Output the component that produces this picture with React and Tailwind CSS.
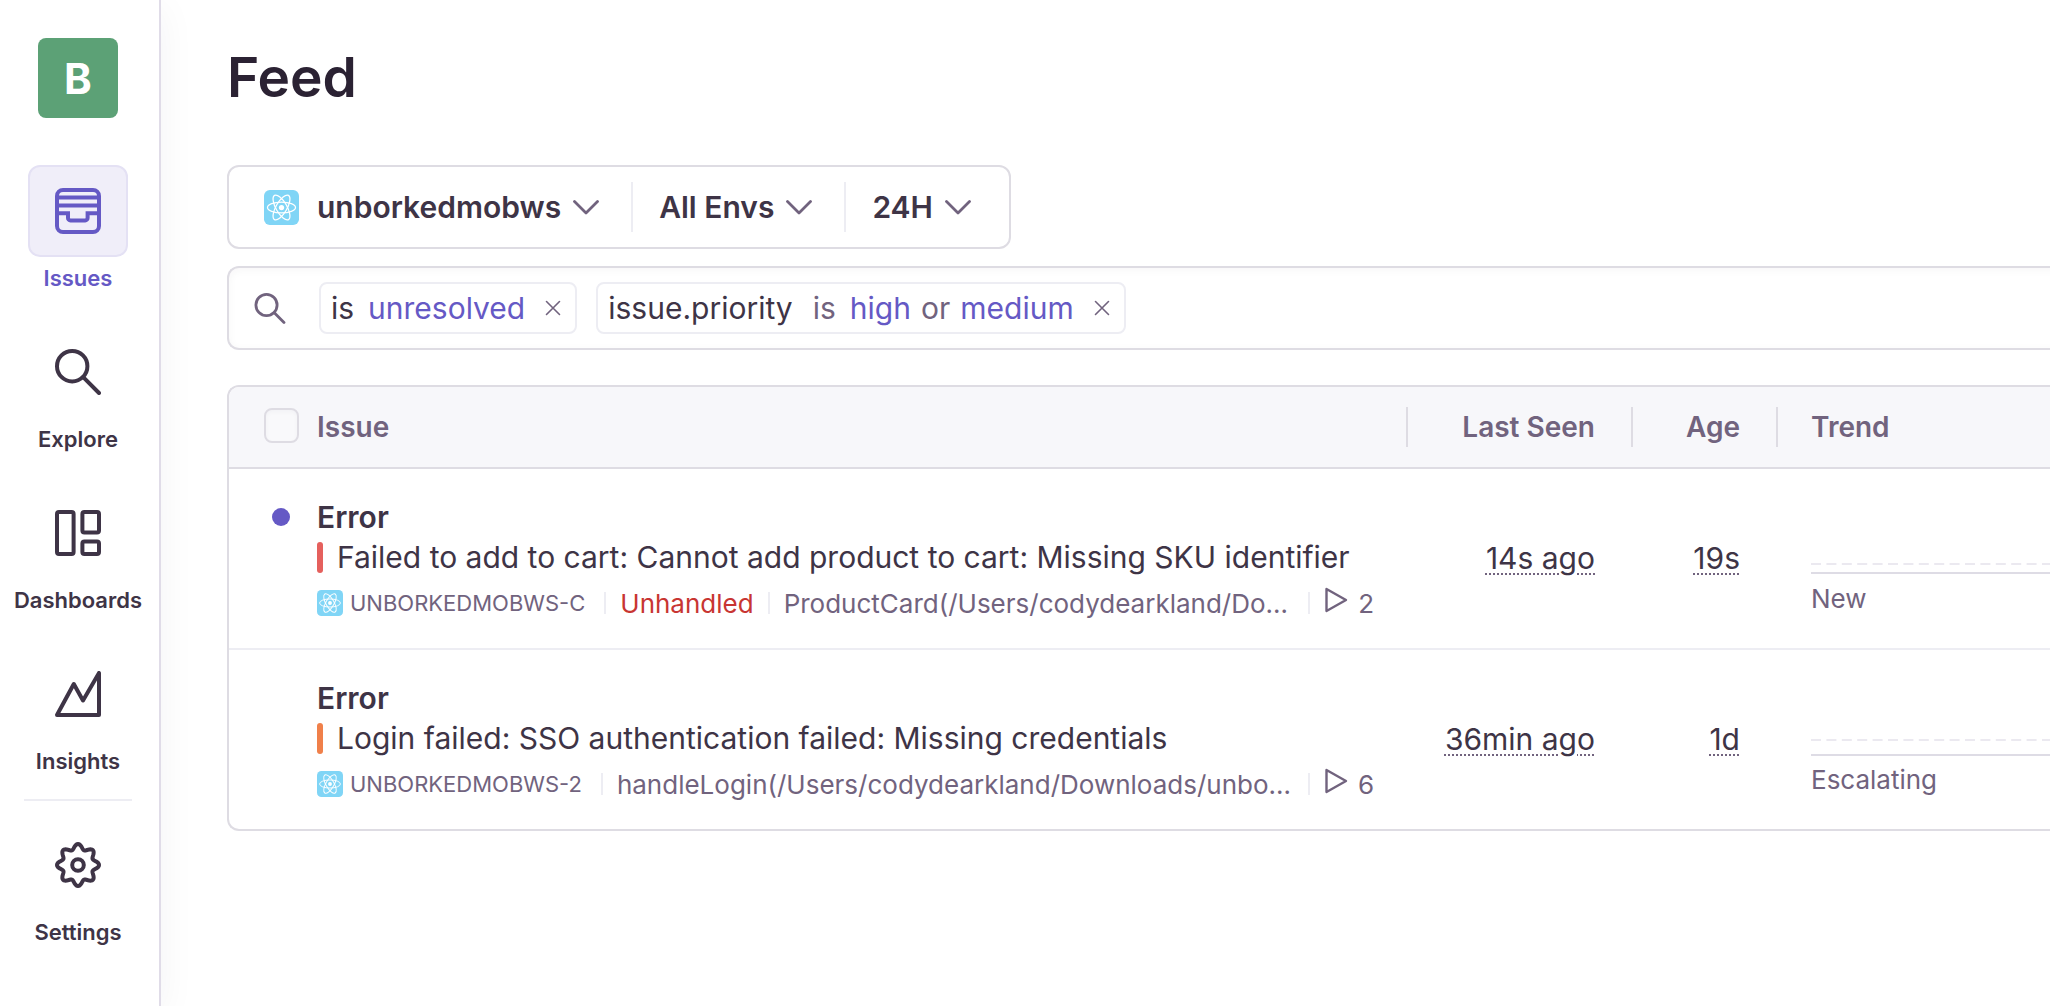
import React from "react";

const gearPath =
  Array.from({ length: 160 }, (_, i) => {
    const a = (i / 160) * Math.PI * 2;
    const r = 18.4 + 2.6 * Math.cos(8 * a);
    const x = (23 + r * Math.sin(a)).toFixed(2);
    const y = (23 - r * Math.cos(a)).toFixed(2);
    return `${i ? "L" : "M"}${x} ${y}`;
  }).join("") + "Z";

function NavIcon({ children }) {
  return (
    <svg
      viewBox="0 0 46 46"
      className="size-[46px]"
      fill="none"
      stroke="currentColor"
      strokeWidth="4"
      strokeLinecap="round"
      strokeLinejoin="round"
      aria-hidden="true"
    >
      {children}
    </svg>
  );
}

const icons = {
  issues: (
    <NavIcon>
      <rect x="2" y="2" width="42" height="42" rx="6" />
      <path d="M3 9.5H43M3 17.5H43" strokeLinecap="butt" />
      <path d="M3 25.2H13V30a2.4 2.4 0 0 0 2.4 2.4H30.2a2.4 2.4 0 0 0 2.4-2.4V25.2H43" strokeLinecap="butt" strokeLinejoin="miter" />
    </NavIcon>
  ),
  explore: (
    <NavIcon>
      <circle cx="17.2" cy="17.2" r="15.2" />
      <path d="M28.2 28.2L44 44" />
    </NavIcon>
  ),
  dashboards: (
    <NavIcon>
      <rect x="2" y="2" width="16.6" height="42" rx="2" />
      <rect x="27.4" y="2" width="16.6" height="20.6" rx="2" />
      <rect x="27.4" y="31.4" width="16.6" height="12.6" rx="2" />
    </NavIcon>
  ),
  insights: (
    <NavIcon>
      <path d="M2 44L18.8 13L28 29.4L44 2V44Z" />
    </NavIcon>
  ),
  settings: (
    <NavIcon>
      <path d={gearPath} />
      <circle cx="23" cy="23" r="5.8" />
    </NavIcon>
  ),
};

function ReactBadge({ className }) {
  return (
    <svg viewBox="0 0 36 36" className={className} aria-hidden="true">
      <rect width="36" height="36" rx="6" fill="#80d5f6" />
      <g fill="none" stroke="#fff" strokeWidth="1.3">
        <ellipse cx="18" cy="18" rx="14.4" ry="5.6" />
        <ellipse cx="18" cy="18" rx="14.4" ry="5.6" transform="rotate(60 18 18)" />
        <ellipse cx="18" cy="18" rx="14.4" ry="5.6" transform="rotate(120 18 18)" />
      </g>
      <circle cx="18" cy="18" r="2.7" fill="#fff" />
    </svg>
  );
}

function Chevron() {
  return (
    <svg viewBox="0 0 26 15" className="h-[15px] w-[26px] text-[#71637e]" fill="none" stroke="currentColor" strokeWidth="2.8" strokeLinecap="round" strokeLinejoin="round" aria-hidden="true">
      <path d="M1.5 1.5L13 13L24.5 1.5" />
    </svg>
  );
}

function NavItem({ icon, label, active }) {
  return (
    <a href="#" className={`flex flex-col items-center gap-[7px] ${active ? "text-[#6559c5]" : "text-[#3e3446]"}`}>
      <span className={`flex h-[92px] w-[100px] items-center justify-center rounded-xl border-2 ${active ? "border-[#e4e1f4] bg-[#f0eef9]" : "border-transparent"}`}>
        {icons[icon]}
      </span>
      <span className="text-[22px] leading-7 font-semibold">{label}</span>
    </a>
  );
}

function Token({ label, children }) {
  return (
    <div className="flex h-[52px] items-center rounded-lg border-2 border-[#ededf3] bg-white pr-3.5 pl-2.5 whitespace-pre">
      {children}
      <button type="button" aria-label={label} className="ml-5 text-[#71637e]">
        <svg viewBox="0 0 16 16" className="size-4" fill="none" stroke="currentColor" strokeWidth="1.6" strokeLinecap="round" aria-hidden="true">
          <path d="M1.5 1.5L14.5 14.5M14.5 1.5L1.5 14.5" />
        </svg>
      </button>
    </div>
  );
}

function Separator() {
  return <span className="h-[22px] w-0.5 shrink-0 bg-[#ededf3]" />;
}

const issues = [
  {
    unread: true,
    bar: "bg-[#e5605d]",
    title: "Failed to add to cart: Cannot add product to cart: Missing SKU identifier",
    id: "UNBORKEDMOBWS-C",
    unhandled: true,
    culprit: "ProductCard(/Users/codydearkland/Do…",
    replays: 2,
    lastSeen: "14s ago",
    age: "19s",
    trend: "New",
    dashY: 95,
    baseY: 104,
  },
  {
    bar: "bg-[#f0804a]",
    title: "Login failed: SSO authentication failed: Missing credentials",
    id: "UNBORKEDMOBWS-2",
    culprit: "handleLogin(/Users/codydearkland/Downloads/unbo…",
    replays: 6,
    lastSeen: "36min ago",
    age: "1d",
    trend: "Escalating",
    dashY: 90,
    baseY: 105,
  },
];

function Time({ children }) {
  return (
    <td className="pr-9 text-right align-middle text-[30px] whitespace-nowrap">
      <time className="underline decoration-[#71637e] decoration-dotted decoration-2 underline-offset-4">{children}</time>
    </td>
  );
}

function IssueRow({ issue }) {
  return (
    <tr className="border-t-2 border-[#ededf3] first:border-t-0">
      <td className="p-0">
        <div className="flex pt-7 pr-8 pb-[25px]">
          <div className="flex h-10 w-[88px] shrink-0 items-center pl-[43px]">
            {issue.unread && <span className="size-[18px] rounded-full bg-[#6559c5]" />}
          </div>
          <div className="min-w-0 grow">
            <div className="text-[30px] leading-10 font-semibold">Error</div>
            <div className="flex items-center gap-3.5">
              <span className={`h-[31px] w-1.5 shrink-0 rounded-full ${issue.bar}`} />
              <a href="#" className="truncate text-[30px] leading-10">{issue.title}</a>
            </div>
            <div className="mt-1.5 flex h-10 items-center text-[26px] text-[#71637e]">
              <ReactBadge className="mr-[7px] size-[26px] shrink-0" />
              <span className="mr-[19px] text-[22px]">{issue.id}</span>
              <Separator />
              {issue.unhandled && (
                <>
                  <span className="mx-3.5 text-[#c83532]">Unhandled</span>
                  <Separator />
                </>
              )}
              <span className="ml-3.5 grow whitespace-nowrap">{issue.culprit}</span>
              <Separator />
              <a href="#" className="ml-3.5 flex items-center gap-2.5">
                <svg viewBox="0 0 24 26" className="mb-1.5 h-[26px] w-6" fill="none" stroke="currentColor" strokeWidth="2.4" strokeLinejoin="round" aria-hidden="true">
                  <path d="M2.5 2L22 13L2.5 24Z" />
                </svg>
                {issue.replays}
              </a>
            </div>
          </div>
        </div>
      </td>
      <Time>{issue.lastSeen}</Time>
      <Time>{issue.age}</Time>
      <td className="p-0 pl-[35px] align-top">
        <svg className="h-[108px] w-full" aria-hidden="true">
          <line x1="0" x2="100%" y1={issue.dashY} y2={issue.dashY} stroke="#ebe9f0" strokeWidth="2" strokeDasharray="10 5.4" />
          <line x1="0" x2="100%" y1={issue.baseY} y2={issue.baseY} stroke="#dedce5" strokeWidth="2" />
        </svg>
        <div className="mt-1.5 text-[26px] leading-8 text-[#71637e]">{issue.trend}</div>
      </td>
    </tr>
  );
}

export default function App() {
  return (
    <div className="flex min-h-screen overflow-hidden bg-white font-['Inter',sans-serif] text-[#3e3446]">
      <nav className="flex w-[161px] shrink-0 flex-col items-center border-r-2 border-[#e0dce8] pt-[38px] pr-[3px] shadow-[0_8px_36px_rgba(43,34,51,0.05)]">
        <a href="#" className="flex size-20 items-center justify-center rounded-lg bg-[#5ca176] text-[42px] font-bold text-white">
          B
        </a>
        <div className="mt-[47px] flex flex-col items-center gap-[34px]">
          <NavItem icon="issues" label="Issues" active />
          <NavItem icon="explore" label="Explore" />
          <NavItem icon="dashboards" label="Dashboards" />
          <NavItem icon="insights" label="Insights" />
        </div>
        <hr className="mt-6 mb-[18px] w-27 border-t-2 border-[#ededf3]" />
        <NavItem icon="settings" label="Settings" />
      </nav>

      <main className="min-w-0 grow pt-[41px] pl-[66px]">
        <h1 className="text-[55px] leading-[72px] font-semibold text-[#2b2233]">Feed</h1>

        <div className="mt-[52px] flex h-[84px] w-fit items-center rounded-xl border-2 border-[#dedce3] text-[30px] font-semibold">
          <button type="button" className="flex items-center gap-3 pr-8 pl-[35px]">
            <ReactBadge className="mr-1.5 size-[35px]" />
            unborkedmobws
            <Chevron />
          </button>
          <span className="h-[50px] w-0.5 bg-[#ededf3]" />
          <button type="button" className="flex items-center gap-3 pr-8 pl-[26px]">
            All Envs
            <Chevron />
          </button>
          <span className="h-[50px] w-0.5 bg-[#ededf3]" />
          <button type="button" className="flex items-center gap-3 pr-[38px] pl-[26px]">
            24H
            <Chevron />
          </button>
        </div>

        <div className="mt-[17px] -mr-3 flex h-[84px] items-center rounded-l-xl border-2 border-r-0 border-[#dedce3] pl-[25px] text-[30px] shadow-[inset_0_2px_8px_rgba(43,34,51,0.04)]">
          <svg viewBox="0 0 32 32" className="mr-[33px] size-8 shrink-0 text-[#71637e]" fill="none" stroke="currentColor" strokeWidth="2.8" strokeLinecap="round" aria-hidden="true">
            <circle cx="12.5" cy="13" r="10.6" />
            <path d="M20.3 20.8L30 30.5" />
          </svg>
          <div className="flex gap-[19px]">
            <Token label="Remove filter is unresolved">
              <span>is</span>
              <span className="ml-3.5 text-[#6559c5]">unresolved</span>
            </Token>
            <Token label="Remove filter issue.priority">
              <span>issue.priority</span>
              <span className="ml-5 text-[#71637e]">is</span>
              <span className="ml-3.5 text-[#6559c5]">high</span>
              <span className="mx-2.5 text-[#71637e]">or</span>
              <span className="text-[#6559c5]">medium</span>
            </Token>
          </div>
          <input type="text" aria-label="Search issues" className="ml-4 h-12 min-w-0 grow bg-transparent outline-none" />
        </div>

        <div className="mt-[35px] overflow-hidden rounded-l-xl border-2 border-r-0 border-[#dedce3]">
          <table className="w-full table-fixed border-collapse">
            <colgroup>
              <col />
              <col className="w-[225px]" />
              <col className="w-[145px]" />
              <col className="w-[274px]" />
            </colgroup>
            <thead className="bg-[#f7f7fa] text-[28px] text-[#71637e]">
              <tr className="h-[81px] border-b-2 border-[#dedce3]">
                <th className="p-0 text-left font-semibold">
                  <div className="flex items-center">
                    <input type="checkbox" aria-label="Select all issues" className="mr-[18px] mb-1 ml-[35px] size-[35px] appearance-none rounded-lg border-2 border-[#dedce3] bg-[#f9f9fb] shadow-[inset_0_2px_4px_rgba(43,34,51,0.03)]" />
                    Issue
                  </div>
                </th>
                <th className="p-0 font-semibold">
                  <div className="flex h-10 items-center justify-end border-l-2 border-[#dedce3] pr-9">Last Seen</div>
                </th>
                <th className="p-0 font-semibold">
                  <div className="flex h-10 items-center justify-end border-l-2 border-[#dedce3] pr-9">Age</div>
                </th>
                <th className="p-0 font-semibold">
                  <div className="flex h-10 items-center border-l-2 border-[#dedce3] pl-[33px]">Trend</div>
                </th>
              </tr>
            </thead>
            <tbody>
              {issues.map((issue) => (
                <IssueRow key={issue.id} issue={issue} />
              ))}
            </tbody>
          </table>
        </div>
      </main>
    </div>
  );
}
